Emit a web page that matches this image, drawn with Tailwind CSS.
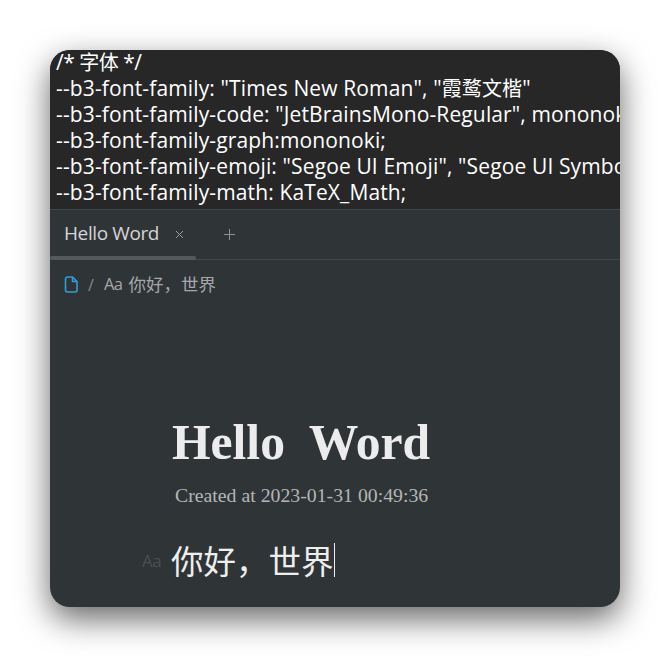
<!DOCTYPE html>
<html lang="en">

<head>
  <meta charset="UTF-8" />
  <title>Hello Word</title>
  <script src="https://cdn.jsdelivr.net/npm/@tailwindcss/browser@4"></script>
</head>

<body class="bg-white w-[670px] h-[657px] overflow-hidden p-[50px]">

  <!-- Window -->
  <div class="w-[570px] h-[557px] rounded-[20px] overflow-hidden bg-[#2f3437] flex flex-col shadow-[0_12px_32px_rgba(0,0,0,0.6)]">

    <!-- Code block -->
    <div class="h-[159px] shrink-0 bg-[#272727] text-white text-[21px] leading-[25.9px] tracking-[0.13px] whitespace-nowrap overflow-hidden pl-[6px] font-['Open_Sans','Noto_Sans_CJK_SC',sans-serif]">
      <div class="tracking-[-0.5px]">/* <span class="text-[20px]">字体</span> */</div>
      <div>--b3-font-family: "Times New Roman", "<span class="text-[20px]">霞鹜文楷</span>"</div>
      <div>--b3-font-family-code: "JetBrainsMono-Regular", mononoki</div>
      <div>--b3-font-family-graph:mononoki;</div>
      <div>--b3-font-family-emoji: "Segoe UI Emoji", "Segoe UI Symbol"</div>
      <div>--b3-font-family-math: KaTeX_Math;</div>
    </div>

    <!-- Tab bar -->
    <div class="h-[51px] shrink-0 border-t border-b border-[#43484b] relative flex items-center pl-[14px] pb-[2px] font-['Open_Sans','Noto_Sans_CJK_SC',sans-serif]">
      <span class="text-[19px] text-[#d4d5d6] tracking-[-0.4px]">Hello Word</span>
      <svg class="ml-[16px] mt-[1px]" width="9" height="9" viewBox="0 0 9 9" fill="none" stroke="#9b9e9f" stroke-width="1"><path d="M1 1l7 7M8 1l-7 7" /></svg>
      <svg class="ml-[40px] mt-[1px]" width="11" height="11" viewBox="0 0 11 11" fill="none" stroke="#8f9293" stroke-width="1"><path d="M5.5 0v11M0 5.5h11" /></svg>
      <div class="absolute left-0 bottom-[-1px] w-[146px] h-[4px] rounded-full bg-[#55595c]"></div>
    </div>

    <!-- Breadcrumb -->
    <div class="h-[50px] shrink-0 flex items-center pl-[14px] pb-[1px] font-['Open_Sans','Noto_Sans_CJK_SC',sans-serif]">
      <svg width="14" height="17" viewBox="0 0 14 17" fill="none" stroke="#2e9fd6" stroke-width="1.6" stroke-linejoin="round"><path d="M1.5 3a2 2 0 0 1 2-2h5l4.5 4.5V14a2 2 0 0 1-2 2h-7.5a2 2 0 0 1-2-2zM8.5 1v4.5H13" /></svg>
      <span class="ml-[10px] text-[16px] text-[#85898b]">/</span>
      <span class="ml-[10px] text-[16.5px] text-[#a5a8a9] tracking-[-0.5px]">Aa</span>
      <span class="ml-[6px] text-[17.5px] text-[#a5a8a9]">你好，世界</span>
    </div>

    <!-- Document -->
    <div class="flex-1 pl-[122px] pt-[103px]">
      <h1 class="text-[49.6px] leading-[60px] font-bold text-[#ececec] whitespace-pre font-['Liberation_Serif',serif]">Hello  Word</h1>
      <p class="ml-[3px] mt-[9px] text-[19.8px] leading-[26px] text-[#b4b6b7] font-['Liberation_Serif',serif]">Created at 2023-01-31 00:49:36</p>
      <div class="relative mt-[29px] -ml-[1px] flex items-center h-[46px] font-['Noto_Sans_CJK_SC',sans-serif]">
        <span class="absolute left-[-29px] top-[14px] text-[17px] leading-[20px] text-[#4a4f52] font-['Open_Sans',sans-serif] tracking-[-0.5px]">Aa</span>
        <span class="text-[32.5px] leading-[40px] text-[#eeeeee]">你好，世界</span>
        <span class="w-px h-[34px] bg-[#eeeeee]"></span>
      </div>
    </div>
  </div>

</body>

</html>
